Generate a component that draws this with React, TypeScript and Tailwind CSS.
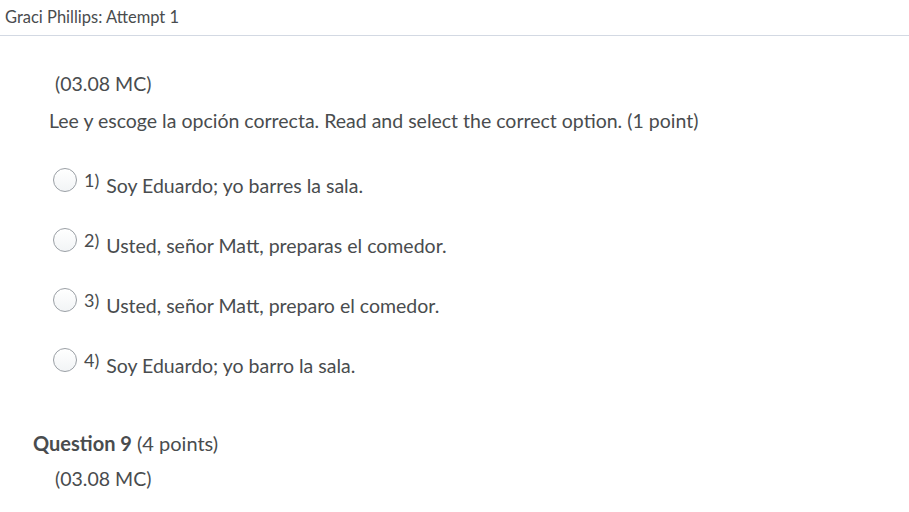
const options = [
  "Soy Eduardo; yo barres la sala.",
  "Usted, señor Matt, preparas el comedor.",
  "Usted, señor Matt, preparo el comedor.",
  "Soy Eduardo; yo barro la sala.",
];

export default function App() {
  return (
    <div className="h-[512px] w-[909px] overflow-hidden bg-white text-[#494c4e] [font-family:Lato,'Liberation_Sans',sans-serif]">
      {/* Header */}
      <div className="flex h-[36px] items-center border-b border-[#d3d9e3] px-[5px] pb-[1px] text-[16.5px]">
        Graci Phillips: Attempt 1
      </div>

      <div className="pl-[49px] pt-[36px]">
        <p className="pl-[6px] text-[19.5px] leading-[24px]">(03.08 MC)</p>
        <p className="mt-[13px] text-[19.5px] leading-[24px]">
          Lee y escoge la opción correcta. Read and select the correct option. (1 point)
        </p>

        <div className="mt-[35px] flex flex-col gap-[36px] pl-[4px]">
          {options.map((o, i) => (
            <label key={i} className="flex h-[24px] items-center">
              <span className="h-[24px] w-[24px] rounded-full border border-[#9a9fa5] bg-gradient-to-b from-white to-[#f2f4f6]" />
              <span className="ml-[7px] mt-[1px] text-[18px]">{i + 1})</span>
              <span className="ml-[7px] mt-[11px] text-[19.5px]">{o}</span>
            </label>
          ))}
        </div>
      </div>

      <div className="pl-[33px] pt-[59px]">
        <p className="text-[20px] leading-[24px]">
          <span className="font-bold">Question 9</span> (4 points)
        </p>
        <p className="mt-[12px] pl-[22px] text-[19.5px] leading-[24px]">(03.08 MC)</p>
      </div>
    </div>
  );
}
